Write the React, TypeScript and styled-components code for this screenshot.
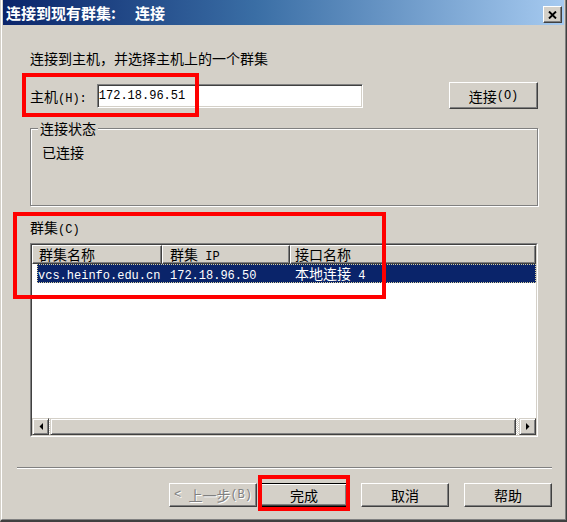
import React from 'react';
import styled, { createGlobalStyle } from 'styled-components';

const CJK = `"Noto Sans CJK SC", "Noto Sans", sans-serif`;
const MONO = `"Liberation Mono", "DejaVu Sans Mono", monospace`;

const GlobalStyle = createGlobalStyle`
  html, body { margin: 0; padding: 0; background: #3a3a3a; }
  body { font-family: ${CJK}; }
  * { box-sizing: border-box; }
`;

const Window = styled.div`
  position: relative;
  width: 567px;
  height: 522px;
  display: flex;
  flex-direction: column;
  background: #d4d0c8;
  border-left: 1px solid #d4d0c8;
  border-right: 1px solid #404040;
  border-bottom: 2px solid #404040;
  font-family: ${CJK};
  font-size: 14px;
  color: #000;
`;

const Frame = styled.div`
  flex: 1;
  min-height: 0;
  display: flex;
  flex-direction: column;
  border-left: 1px solid #ffffff;
  border-right: 1px solid #808080;
  border-bottom: 1px solid #808080;
  padding: 0 1px 1px 1px;
`;

const TitleBar = styled.div`
  height: 25px;
  display: flex;
  align-items: flex-start;
  padding: 0 2px 0 3px;
  background: linear-gradient(to right, #0a246a 0%, #3a6ea5 45%, #a6caf0 100%);
`;

const TitleText = styled.div`
  color: #fff;
  font-weight: 700;
  font-size: 15px;
  line-height: 18px;
  margin-top: 4px;
  white-space: nowrap;
`;

const TitleSub = styled.span`
  margin-left: 19px;
`;

const CloseButton = styled.div`
  margin-left: auto;
  margin-top: 6px;
  width: 19px;
  height: 17px;
  display: flex;
  align-items: center;
  justify-content: center;
  background: #d4d0c8;
  border: 1px solid;
  border-color: #ffffff #404040 #404040 #ffffff;
  box-shadow: inset -1px -1px 0 #808080;
`;

const Body = styled.div`
  flex: 1;
  display: flex;
  flex-direction: column;
`;

const Content = styled.div`
  display: flex;
  flex-direction: column;
  padding: 0 26px 0 27px;
`;

const Text = styled.div<{ $mt?: number }>`
  line-height: 16px;
  white-space: nowrap;
  margin-top: ${(p) => p.$mt ?? 0}px;
`;

const Latin = styled.span`
  font-family: ${MONO};
  font-size: 12px;
  line-height: 10px;
  white-space: pre;
`;

const HostRow = styled.div`
  margin-top: 16px;
  height: 27px;
  display: flex;
  align-items: center;
`;

const Field = styled.input`
  margin: 0 0 0 10px;
  width: 266px;
  height: 24px;
  padding: 0 0 0 1px;
  background: #fff;
  border: 1px solid;
  border-color: #808080 #ffffff #ffffff #808080;
  box-shadow: inset 1px 1px 0 #404040, inset -1px -1px 0 #d4d0c8;
  font-family: ${MONO};
  font-size: 12px;
  color: #000;
  outline: none;
`;

const Button = styled.button<{ $w: number; $h: number; $ml?: number; $default?: boolean }>`
  width: ${(p) => p.$w}px;
  height: ${(p) => p.$h}px;
  margin: 0 0 0 ${(p) => p.$ml ?? 0}px;
  padding: 0;
  display: flex;
  align-items: center;
  justify-content: center;
  background: #d4d0c8;
  border: 1px solid;
  border-color: ${(p) => (p.$default ? '#000' : '#ffffff #404040 #404040 #ffffff')};
  box-shadow: ${(p) =>
    p.$default
      ? 'inset 1px 1px 0 #fff, inset -1px -1px 0 #404040, inset -2px -2px 0 #808080'
      : 'inset -1px -1px 0 #808080'};
  font-family: ${CJK};
  font-size: 14px;
  line-height: 16px;
  color: #000;
  white-space: nowrap;
  &:disabled {
    color: #808080;
    text-shadow: 1px 1px 0 #ffffff;
  }
`;

const PushRight = styled.div`
  margin-left: auto;
`;

const GroupBox = styled.div`
  position: relative;
  margin-top: 19px;
  height: 78px;
  border: 1px solid #808080;
  box-shadow: inset 1px 1px 0 #ffffff, 1px 1px 0 #ffffff;
  padding: 15px 11px 0 11px;
`;

const Legend = styled.span`
  position: absolute;
  top: -9px;
  left: 7px;
  padding: 0 2px;
  line-height: 16px;
  background: #d4d0c8;
  white-space: nowrap;
`;

const ListView = styled.div`
  margin-top: 8px;
  height: 194px;
  border: 1px solid;
  border-color: #808080 #ffffff #ffffff #808080;
  display: flex;
`;

const ListInner = styled.div`
  flex: 1;
  display: flex;
  flex-direction: column;
  background: #fff;
  border: 1px solid;
  border-color: #404040 #d4d0c8 #d4d0c8 #404040;
  overflow: hidden;
`;

const HeaderRow = styled.div`
  height: 19px;
  display: grid;
  grid-template-columns: 130px 128px 1fr;
`;

const HeaderCell = styled.div<{ $pl: number }>`
  background: #d4d0c8;
  border-top: 1px solid #fff;
  border-left: 1px solid #fff;
  border-right: 1px solid #404040;
  border-bottom: 1px solid #404040;
  box-shadow: inset -1px -1px 0 #808080;
  padding-left: ${(p) => p.$pl}px;
  line-height: 17px;
  white-space: nowrap;
`;

const ListBody = styled.div`
  flex: 1;
  display: flex;
  flex-direction: column;
`;

const Row = styled.div`
  margin-left: 5px;
  height: 19px;
  display: grid;
  grid-template-columns: 124px 128px 1fr;
  background: #0a246a;
  color: #fff;
  border: 1px dotted #d8d09c;
`;

const Cell = styled.div<{ $pl: number }>`
  padding-left: ${(p) => p.$pl}px;
  line-height: 17px;
  white-space: nowrap;
`;

const Scrollbar = styled.div`
  height: 17px;
  display: flex;
`;

const ScrollButton = styled.div`
  width: 17px;
  height: 17px;
  display: flex;
  align-items: center;
  justify-content: center;
  background: #d4d0c8;
  border: 1px solid;
  border-color: #d4d0c8 #404040 #404040 #d4d0c8;
  box-shadow: inset 1px 1px 0 #ffffff, inset -1px -1px 0 #808080;
`;

const Track = styled.div`
  flex: 1;
  display: flex;
  background: repeating-conic-gradient(#ffffff 0 25%, #d4d0c8 0 50%) 0 0 / 2px 2px;
`;

const Thumb = styled.div`
  flex: 1;
  margin: 0 3px 0 1px;
  background: #d4d0c8;
  border: 1px solid;
  border-color: #d4d0c8 #404040 #404040 #d4d0c8;
  box-shadow: inset 1px 1px 0 #ffffff, inset -1px -1px 0 #808080;
`;

const Separator = styled.div`
  margin: 30px 12px 0 14px;
  border-top: 1px solid #808080;
  border-bottom: 1px solid #ffffff;
`;

const ButtonRow = styled.div`
  margin-top: 14px;
  display: flex;
  justify-content: flex-end;
  padding-right: 12px;
`;

const Annotation = styled.div<{ $x: number; $y: number; $w: number; $h: number }>`
  position: absolute;
  left: ${(p) => p.$x}px;
  top: ${(p) => p.$y}px;
  width: ${(p) => p.$w}px;
  height: ${(p) => p.$h}px;
  border: 4px solid #ff0000;
  pointer-events: none;
`;

const CloseIcon = () => (
  <svg width="9" height="8" viewBox="0 0 9 8">
    <path d="M1 0.5 L8 7.5 M8 0.5 L1 7.5" stroke="#000" strokeWidth="1.9" />
  </svg>
);

const Arrow = ({ dir }: { dir: 'left' | 'right' }) => (
  <svg width="4" height="7" viewBox="0 0 4 7">
    <polygon points={dir === 'left' ? '4,0 4,7 0.5,3.5' : '0,0 0,7 3.5,3.5'} fill="#000" />
  </svg>
);

export default function App() {
  return (
    <>
      <GlobalStyle />
      <Window>
        <Frame>
          <TitleBar>
            <TitleText>
              连接到现有群集:<TitleSub>连接</TitleSub>
            </TitleText>
            <CloseButton>
              <CloseIcon />
            </CloseButton>
          </TitleBar>
          <Body>
            <Content>
              <Text $mt={25}>连接到主机，并选择主机上的一个群集</Text>
              <HostRow>
                <Text>
                  主机<Latin>(H):</Latin>
                </Text>
                <Field readOnly value="172.18.96.51" />
                <PushRight>
                  <Button $w={89} $h={27}>
                    连接<Latin>(O)</Latin>
                  </Button>
                </PushRight>
              </HostRow>
              <GroupBox>
                <Legend>连接状态</Legend>
                <Text>已连接</Text>
              </GroupBox>
              <Text $mt={13}>
                群集<Latin>(C)</Latin>
              </Text>
              <ListView>
                <ListInner>
                  <HeaderRow>
                    <HeaderCell $pl={6}>群集名称</HeaderCell>
                    <HeaderCell $pl={7}>
                      群集<Latin> IP</Latin>
                    </HeaderCell>
                    <HeaderCell $pl={4}>接口名称</HeaderCell>
                  </HeaderRow>
                  <ListBody>
                    <Row>
                      <Cell $pl={0}>
                        <Latin>vcs.heinfo.edu.cn</Latin>
                      </Cell>
                      <Cell $pl={8}>
                        <Latin>172.18.96.50</Latin>
                      </Cell>
                      <Cell $pl={5}>
                        本地连接<Latin> 4</Latin>
                      </Cell>
                    </Row>
                  </ListBody>
                  <Scrollbar>
                    <ScrollButton>
                      <Arrow dir="left" />
                    </ScrollButton>
                    <Track>
                      <Thumb />
                    </Track>
                    <ScrollButton>
                      <Arrow dir="right" />
                    </ScrollButton>
                  </Scrollbar>
                </ListInner>
              </ListView>
            </Content>
            <Separator />
            <ButtonRow>
              <Button $w={88} $h={24} disabled>
                <Latin>&lt; </Latin>上一步<Latin>(B)</Latin>
              </Button>
              <Button $w={88} $h={24} $ml={3} $default>
                完成
              </Button>
              <Button $w={88} $h={24} $ml={13}>
                取消
              </Button>
              <Button $w={88} $h={24} $ml={15}>
                帮助
              </Button>
            </ButtonRow>
          </Body>
        </Frame>
        <Annotation $x={21} $y={73} $w={177} $h={44} />
        <Annotation $x={12} $y={212} $w={373} $h={87} />
        <Annotation $x={257} $y={475} $w={92} $h={36} />
      </Window>
    </>
  );
}
